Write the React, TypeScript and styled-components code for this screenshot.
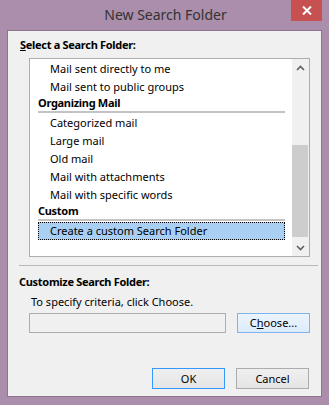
import React from "react";
import styled, { createGlobalStyle } from "styled-components";

const Global = createGlobalStyle`
  html, body { margin: 0; padding: 0; background: #aa8eab; }
  * { box-sizing: border-box; }
  body { font-family: "Noto Sans", "Open Sans", sans-serif; font-size: 11px; color: #000; }
`;

const Window = styled.div`
  width: 329px;
  height: 405px;
  background: #aa8eab;
  display: flex;
  flex-direction: column;
`;

const TitleBar = styled.div`
  height: 30px;
  position: relative;
  display: flex;
  align-items: center;
  justify-content: center;
`;

const Title = styled.div`
  font-size: 14px;
  color: #333;
  line-height: 20px;
  margin-left: 2px;
`;

const CloseButton = styled.div`
  position: absolute;
  top: 0;
  right: 7px;
  width: 31px;
  height: 21px;
  background: #c75050;
  display: flex;
  align-items: center;
  justify-content: center;
`;

const Client = styled.div`
  flex: 1;
  margin: 0 7px 8px 7px;
  border: 1px solid #8f7490;
  background: #f0f0f0;
  display: flex;
  flex-direction: column;
  padding: 6px 0 0 0;
`;

const SectionLabel = styled.div<{ $left: number; $top?: number }>`
  font-weight: 700;
  letter-spacing: -0.3px;
  line-height: 16px;
  margin-top: ${(p) => p.$top ?? 0}px;
  padding-left: ${(p) => p.$left}px;
  white-space: nowrap;
`;

const Accel = styled.span`
  text-decoration: underline;
`;

const ListBox = styled.div`
  margin: 5px 0 0 21px;
  width: 281px;
  height: 199px;
  border: 1px solid #abadb3;
  background: #fff;
  display: flex;
`;

const ListContent = styled.div`
  flex: 1;
  padding: 1px 7px 0 8px;
  display: flex;
  flex-direction: column;
  overflow: hidden;
`;

const Item = styled.div<{ $selected?: boolean }>`
  height: 18px;
  line-height: 16px;
  padding-left: ${(p) => (p.$selected ? 11 : 12)}px;
  white-space: nowrap;
  display: flex;
  align-items: center;
  ${(p) => (p.$selected ? `background: #a9cff3; border: 1px dotted #000;` : ``)}
`;

const Header = styled.div`
  height: 18px;
  display: flex;
  flex-direction: column;
`;

const HeaderText = styled.div`
  font-weight: 700;
  letter-spacing: -0.3px;
  line-height: 14px;
  height: 15px;
  white-space: nowrap;
`;

const HeaderRule = styled.div`
  height: 2px;
  background: #c3c3c3;
`;

const ScrollBar = styled.div`
  width: 17px;
  background: #f0f0f0;
  display: flex;
  flex-direction: column;
`;

const ScrollArrow = styled.div`
  height: 17px;
  display: flex;
  align-items: center;
  justify-content: center;
`;

const Track = styled.div`
  flex: 1;
  display: flex;
  flex-direction: column;
  padding: 69px 1px 2px 0;
`;

const Thumb = styled.div`
  flex: 1;
  background: #cdcdcd;
`;

const Rule = styled.div`
  margin: 8px 3px 0 11px;
  height: 1px;
  background: #b9b9b9;
`;

const Hint = styled.div`
  line-height: 16px;
  padding-left: 23px;
  margin-top: 4px;
  white-space: nowrap;
`;

const Row = styled.div`
  display: flex;
  align-items: center;
  margin: 3px 0 0 21px;
  gap: 11px;
`;

const TextField = styled.div`
  width: 197px;
  height: 20px;
  border: 1px solid #abadb3;
  background: #f0f0f0;
`;

const Button = styled.div<{ $variant?: "default" | "hot" | "plain"; $h?: number }>`
  width: 73px;
  height: ${(p) => p.$h ?? 21}px;
  display: flex;
  align-items: center;
  justify-content: center;
  line-height: 16px;
  border: 1px solid
    ${(p) => (p.$variant === "default" ? "#3399ff" : p.$variant === "hot" ? "#7eb4ea" : "#acacac")};
  background: ${(p) =>
    p.$variant === "hot"
      ? "linear-gradient(#ecf4fc, #dcecfc)"
      : "linear-gradient(#efefef, #e5e5e5)"};
`;

const Footer = styled.div`
  margin-top: auto;
  margin-bottom: 7px;
  display: flex;
  justify-content: flex-end;
  gap: 11px;
  padding-right: 12px;
`;

export default function App() {
  return (
    <>
      <Global />
      <Window>
        <TitleBar>
          <Title>New Search Folder</Title>
          <CloseButton>
            <svg width="10" height="9" viewBox="0 0 10 9">
              <path d="M1 0.5 L9 8.5 M9 0.5 L1 8.5" stroke="#fff" strokeWidth="2" />
            </svg>
          </CloseButton>
        </TitleBar>
        <Client>
          <SectionLabel $left={12}>
            <Accel>S</Accel>elect a Search Folder:
          </SectionLabel>
          <ListBox>
            <ListContent>
              <Item>Mail sent directly to me</Item>
              <Item>Mail sent to public groups</Item>
              <Header>
                <HeaderText>Organizing Mail</HeaderText>
                <HeaderRule />
              </Header>
              <Item>Categorized mail</Item>
              <Item>Large mail</Item>
              <Item>Old mail</Item>
              <Item>Mail with attachments</Item>
              <Item>Mail with specific words</Item>
              <Header>
                <HeaderText>Custom</HeaderText>
                <HeaderRule />
              </Header>
              <Item $selected>Create a custom Search Folder</Item>
            </ListContent>
            <ScrollBar>
              <ScrollArrow>
                <svg width="9" height="6" viewBox="0 0 9 6">
                  <path d="M1 5 L4.5 1.5 L8 5" stroke="#606060" strokeWidth="1.6" fill="none" />
                </svg>
              </ScrollArrow>
              <Track>
                <Thumb />
              </Track>
              <ScrollArrow>
                <svg width="9" height="6" viewBox="0 0 9 6">
                  <path d="M1 1 L4.5 4.5 L8 1" stroke="#606060" strokeWidth="1.6" fill="none" />
                </svg>
              </ScrollArrow>
            </ScrollBar>
          </ListBox>
          <Rule />
          <SectionLabel $left={11} $top={8}>
            Customize Search Folder:
          </SectionLabel>
          <Hint>To specify criteria, click Choose.</Hint>
          <Row>
            <TextField />
            <Button $variant="hot" $h={20}>
              C<Accel>h</Accel>oose...
            </Button>
          </Row>
          <Footer>
            <Button $variant="default">OK</Button>
            <Button $variant="plain">Cancel</Button>
          </Footer>
        </Client>
      </Window>
    </>
  );
}
